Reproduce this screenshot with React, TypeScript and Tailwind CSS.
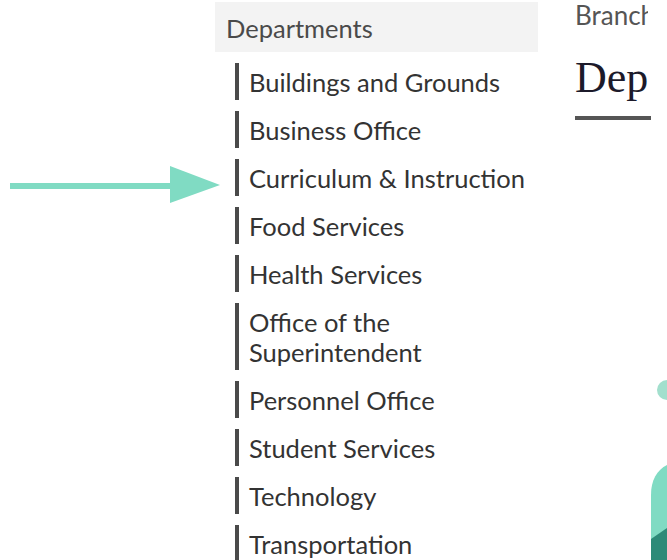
const departments = [
  "Buildings and Grounds",
  "Business Office",
  "Curriculum & Instruction",
  "Food Services",
  "Health Services",
  "Office of the Superintendent",
  "Personnel Office",
  "Student Services",
  "Technology",
  "Transportation",
];

function App() {
  return (
    <div className="relative h-[560px] w-[667px] overflow-hidden bg-white font-['Lato',sans-serif]">
      {/* Pointer arrow */}
      <svg className="absolute left-[10px] top-[166px]" width="212" height="38" viewBox="0 0 212 38">
        <rect x="0" y="17" width="162" height="6" fill="#80dbc3" />
        <polygon points="160,0 210,19 160,37" fill="#80dbc3" />
      </svg>

      {/* Decorative shapes, bottom right */}
      <svg className="absolute right-0 top-[370px]" width="20" height="190" viewBox="0 0 20 190">
        <circle cx="20" cy="20" r="10" fill="#a2dfcd" />
        <path d="M20 95 C10 100 4 110 4 125 L4 190 L20 190 Z" fill="#80dbc3" />
        <path d="M4 169 L20 158 L20 190 L4 190 Z" fill="#2d8a78" />
      </svg>

      <div className="flex pl-[215px] pt-[2px]">
        {/* Sidebar */}
        <nav className="w-[323px] shrink-0">
          <div className="bg-[#f3f3f3] px-[11px] pb-[8px] pt-[10px] text-[25.5px] leading-[32px] text-[#4a4a4a]">
            Departments
          </div>
          <ul className="mt-[11px] flex flex-col gap-[11px] pl-[20px]">
            {departments.map((name) => (
              <li
                key={name}
                className="whitespace-nowrap border-l-4 border-[#4a4a4a] py-[3.5px] pl-[10px] text-[25.5px] leading-[30px] text-[#333]"
              >
                {name === "Office of the Superintendent" ? (
                  <>
                    Office of the
                    <br />
                    Superintendent
                  </>
                ) : (
                  name
                )}
              </li>
            ))}
          </ul>
        </nav>

        {/* Main content */}
        <main className="ml-[37px] w-[76px] shrink-0 overflow-hidden">
          <div className="w-[73px] overflow-hidden whitespace-nowrap text-[26px] leading-[27px] text-[#555]">
            Branch
          </div>
          <h1 className="mt-[26px] whitespace-nowrap font-['Liberation_Serif',serif] text-[44px] leading-[46px] text-[#1c1a2a]">
            Dep
          </h1>
          <div className="mt-[15px] h-[4px] w-full bg-[#555]" />
        </main>
      </div>
    </div>
  );
}

export default App;
